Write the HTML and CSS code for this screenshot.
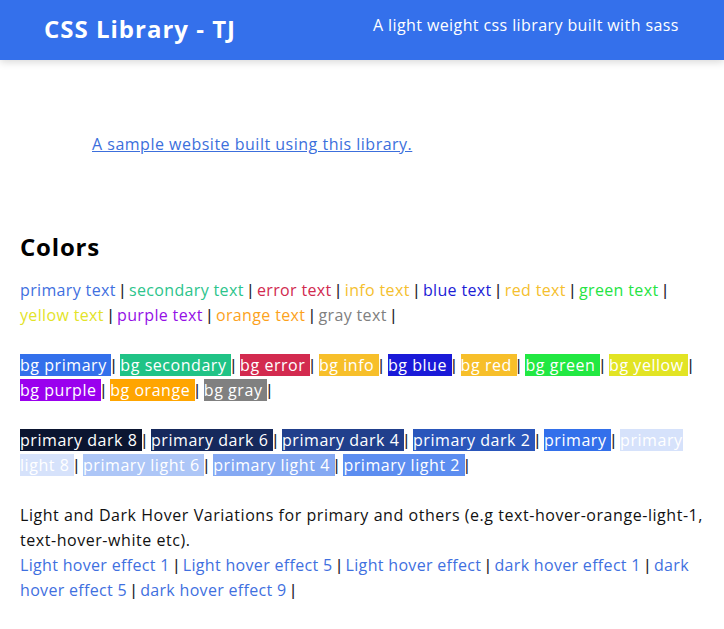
FILE: index.html
```html
<!DOCTYPE html>
<html lang="en">
<head>
<meta charset="utf-8">
<title>CSS Library - TJ</title>
<link rel="stylesheet" href="styles.css">
</head>
<body>
<header class="nav">
  <h1 class="brand">CSS Library - TJ</h1>
  <p class="tagline">A light weight css library built with sass</p>
</header>
<main class="content">
  <section class="intro">
    <a class="sample-link" href="#">A sample website built using this library.</a>
  </section>
  <h2 class="section-title">Colors</h2>
  <p class="row text-row">
    <span class="t-primary">primary text</span> <span class="sep">|</span> <span class="t-secondary">secondary text</span> <span class="sep">|</span> <span class="t-error">error text</span> <span class="sep">|</span> <span class="t-info">info text</span> <span class="sep">|</span> <span class="t-blue">blue text</span> <span class="sep">|</span> <span class="t-red">red text</span> <span class="sep">|</span> <span class="t-green">green text</span> <span class="sep">|</span> <span class="t-yellow">yellow text</span> <span class="sep">|</span> <span class="t-purple">purple text</span> <span class="sep">|</span> <span class="t-orange">orange text</span> <span class="sep">|</span> <span class="t-gray">gray text</span> <span class="sep">|</span>
  </p>
  <p class="row chips">
    <span class="bg-primary">bg primary </span><span class="sep">|</span> <span class="bg-secondary">bg secondary </span><span class="sep">|</span> <span class="bg-error">bg error </span><span class="sep">|</span> <span class="bg-info">bg info </span><span class="sep">|</span> <span class="bg-blue">bg blue </span><span class="sep">|</span> <span class="bg-red">bg red </span><span class="sep">|</span> <span class="bg-green">bg green </span><span class="sep">|</span> <span class="bg-yellow">bg yellow </span><span class="sep">|</span> <span class="bg-purple">bg purple </span><span class="sep">|</span> <span class="bg-orange">bg orange </span><span class="sep">|</span> <span class="bg-gray">bg gray </span><span class="sep">|</span>
  </p>
  <p class="row chips">
    <span class="bg-pd8">primary dark 8 </span><span class="sep">|</span> <span class="bg-pd6">primary dark 6 </span><span class="sep">|</span> <span class="bg-pd4">primary dark 4 </span><span class="sep">|</span> <span class="bg-pd2">primary dark 2 </span><span class="sep">|</span> <span class="bg-primary">primary </span><span class="sep">|</span> <span class="bg-pl8">primary light 8 </span><span class="sep">|</span> <span class="bg-pl6">primary light 6 </span><span class="sep">|</span> <span class="bg-pl4">primary light 4 </span><span class="sep">|</span> <span class="bg-pl2">primary light 2 </span><span class="sep">|</span>
  </p>
  <div class="hover-block">
    <p class="desc">Light and Dark Hover Variations for primary and others (e.g text-hover-orange-light-1, text-hover-white etc).</p>
    <p class="hover-row">
      <span class="t-hover">Light hover effect 1</span> <span class="sep">|</span> <span class="t-hover">Light hover effect 5</span> <span class="sep">|</span> <span class="t-hover">Light hover effect</span> <span class="sep">|</span> <span class="t-hover">dark hover effect 1</span> <span class="sep">|</span> <span class="t-hover">dark hover effect 5</span> <span class="sep">|</span> <span class="t-hover">dark hover effect 9</span> <span class="sep">|</span>
    </p>
  </div>
</main>
</body>
</html>
```
FILE: styles.css
```css
html, body {
  margin: 0;
  padding: 0;
  background: #ffffff;
}
body {
  font-family: "Open Sans", "Noto Sans", sans-serif;
  font-size: 16px;
  line-height: 25px;
  color: #111111;
  letter-spacing: 0.35px;
}
.nav {
  height: 60px;
  background: #3470eb;
  box-shadow: 0 2px 8px rgba(0, 0, 0, 0.16);
  display: flex;
  align-items: flex-start;
  padding: 0 0 0 44px;
  box-sizing: border-box;
  color: #ffffff;
}
.brand {
  margin: 13px 0 0 0;
  font-size: 24px;
  line-height: 32px;
  font-weight: 700;
  letter-spacing: 1px;
}
.tagline {
  margin: 13px 0 0 137px;
  font-size: 16px;
  line-height: 24px;
  letter-spacing: 0.4px;
}
.content {
  padding: 0 18px 0 20px;
}
.intro {
  padding: 72px 0 0 72px;
}
.sample-link {
  color: #3c6fdc;
  text-decoration: underline;
  letter-spacing: 0.5px;
}
.section-title {
  margin: 74px 0 15px 0;
  font-size: 24px;
  line-height: 32px;
  font-weight: 700;
  letter-spacing: 0.8px;
  color: #000000;
}
.row {
  margin: 0 0 25px 0;
  color: #1c1c1c;
}
.sep {
  font-family: "Liberation Sans", Arial, sans-serif;
  letter-spacing: 0;
  color: #1e1e2a;
}
.chips {
  letter-spacing: 0.55px;
}
.chips span:not(.sep) {
  color: #ffffff;
}
.hover-block p {
  margin: 0;
}
.desc {
  color: #111111;
  letter-spacing: 0.55px;
}
.hover-row {
  letter-spacing: 0.32px;
}
.t-primary { color: #3f70e0; }
.t-secondary { color: #2cc48c; }
.t-error { color: #d1294f; }
.t-info { color: #f5c02e; }
.t-blue { color: #1c1cd6; }
.t-red { color: #f5c02e; }
.t-green { color: #25e443; }
.t-yellow { color: #e3e328; }
.t-purple { color: #9410e6; }
.t-orange { color: #fca21c; }
.t-gray { color: #808080; }
.t-hover { color: #3f70e0; }

.bg-primary { background: #3370eb; }
.bg-secondary { background: #20c386; }
.bg-error { background: #d32a4f; }
.bg-info { background: #f7bf2a; }
.bg-blue { background: #1a1ad8; }
.bg-red { background: #f7bf2a; }
.bg-green { background: #22e842; }
.bg-yellow { background: #e2e424; }
.bg-purple { background: #9a00ee; }
.bg-orange { background: #ffa500; }
.bg-gray { background: #808080; }
.bg-pd8 { background: #0b1530; }
.bg-pd6 { background: #16295c; }
.bg-pd4 { background: #213f8c; }
.bg-pd2 { background: #2a56bb; }
.bg-pl8 { background: #d6e2fb; }
.bg-pl6 { background: #adc6f7; }
.bg-pl4 { background: #85a9f3; }
.bg-pl2 { background: #5c8df0; }
```
